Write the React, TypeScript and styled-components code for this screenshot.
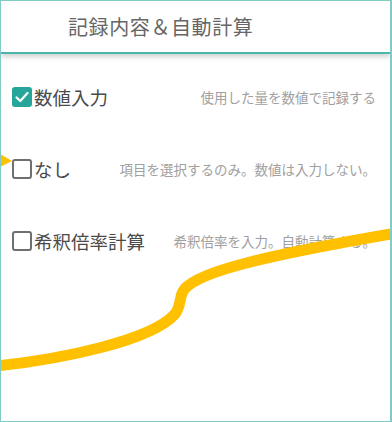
import React from "react";
import styled, { createGlobalStyle } from "styled-components";

const GlobalStyle = createGlobalStyle`
    html, body {
        margin: 0;
        padding: 0;
        background: #ffffff;
    }
    body {
        font-family: "Noto Sans CJK JP", "Noto Sans", sans-serif;
    }
`;

const Frame = styled.div`
    position: relative;
    box-sizing: border-box;
    width: 392px;
    height: 422px;
    border-top: 1px solid #80cbc4;
    border-left: 1px solid #80cbc4;
    border-right: 2px solid #80cbc4;
    border-bottom: 1px solid #80cbc4;
    overflow: hidden;
    background: #fff;
`;

const Header = styled.div`
    height: 51px;
    display: flex;
    align-items: center;
    padding-left: 67px;
    border-bottom: 2px solid #4db6ac;
    box-shadow: 0 3px 5px rgba(0, 0, 0, 0.18);
    font-size: 20px;
    letter-spacing: 0.6px;
    color: #666;
`;

const List = styled.div`
    padding-top: 7px;
    padding-left: 11px;
    padding-right: 14px;
`;

const Row = styled.div`
    height: 72px;
    display: flex;
    align-items: center;
    justify-content: space-between;
`;

const LabelGroup = styled.div`
    display: flex;
    align-items: center;
    gap: 2px;
`;

const Box = styled.span<{ $checked?: boolean }>`
    box-sizing: border-box;
    width: 20px;
    height: 20px;
    border-radius: 3px;
    display: flex;
    align-items: center;
    justify-content: center;
    background: ${p => (p.$checked ? "#26a69a" : "#fff")};
    border: ${p => (p.$checked ? "none" : "2px solid #6f6f6f")};
`;

const Label = styled.span`
    font-size: 18.5px;
    color: #4a4a4a;
    line-height: 1;
`;

const Desc = styled.span`
    font-size: 13.5px;
    color: #a0a0a0;
`;

const Overlay = styled.svg`
    position: absolute;
    left: 0;
    top: 0;
    pointer-events: none;
`;

const rows = [
    { label: "数値入力", desc: "使用した量を数値で記録する", checked: true },
    { label: "なし", desc: "項目を選択するのみ。数値は入力しない。", checked: false },
    { label: "希釈倍率計算", desc: "希釈倍率を入力。自動計算する。", checked: false },
];

const App = () => (
    <>
        <GlobalStyle />
        <Frame>
            <Header>記録内容＆自動計算</Header>
            <List>
                {rows.map((r, i) => (
                    <Row key={i}>
                        <LabelGroup>
                            <Box $checked={r.checked}>
                                {r.checked && (
                                    <svg width="16" height="16" viewBox="0 0 16 16">
                                        <path d="M2.5 8.5 L6.3 12 L13.5 4" fill="none" stroke="#fff" strokeWidth="2.2" strokeLinecap="round" strokeLinejoin="round" />
                                    </svg>
                                )}
                            </Box>
                            <Label>{r.label}</Label>
                        </LabelGroup>
                        <Desc>{r.desc}</Desc>
                    </Row>
                ))}
            </List>
            <Overlay width="392" height="422" viewBox="0 0 392 422">
                <path
                    d="M -4 365 C 60 358, 150 340, 174 313 C 182 303, 176 292, 188 284 C 205 271, 250 257, 396 232"
                    fill="none"
                    stroke="#ffc000"
                    strokeWidth="11"
                />
                <path d="M -1 153 L 11 160 L -1 166 Z" fill="#ffc000" />
            </Overlay>
        </Frame>
    </>
);

export default App;
